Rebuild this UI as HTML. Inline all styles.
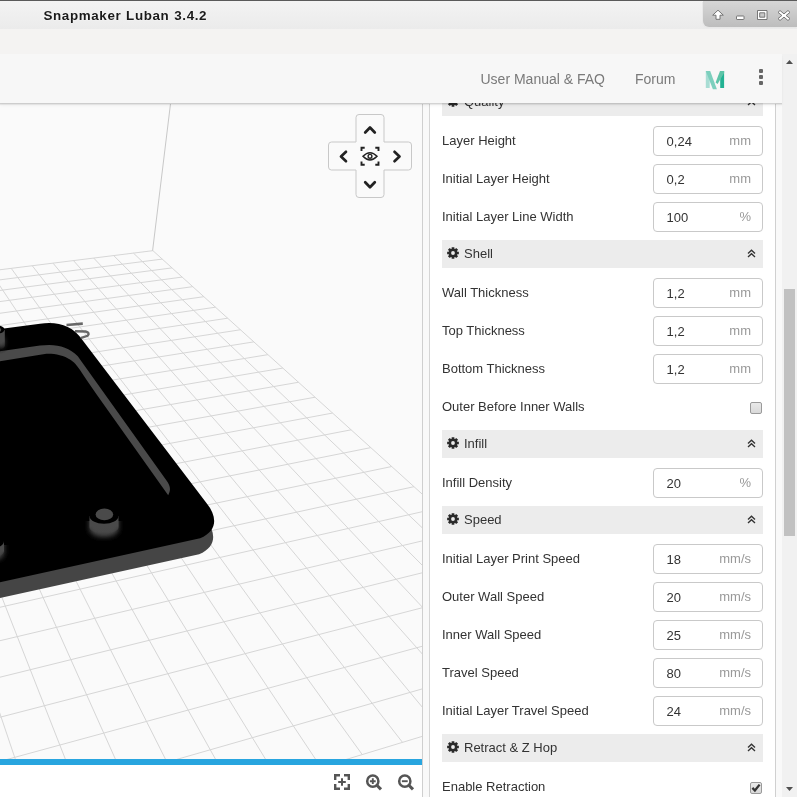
<!DOCTYPE html>
<html><head><meta charset="utf-8">
<style>
*{margin:0;padding:0;box-sizing:border-box}
html,body{width:797px;height:797px;overflow:hidden;background:#f8f8f8;font-family:"Liberation Sans",sans-serif}
body>*{will-change:transform}
.abs{position:absolute}
#title{position:absolute;left:0;top:0;width:797px;height:29px;background:linear-gradient(#f3f3f3,#ebebeb);border-top:1px solid #5a5a5a}
#title .t{position:absolute;left:43.5px;top:6.5px;font:bold 13.4px "Liberation Sans",sans-serif;color:#1a1a1a;text-shadow:0 0 2px #fff;letter-spacing:0.62px;word-spacing:0.5px}
#wbtn{position:absolute;left:703px;top:1px;width:94px;height:26px;background:linear-gradient(#d6d6d6,#bdbdbd);border-bottom-left-radius:6px;box-shadow:-1px 1px 0 #e8e8e8}
#band{position:absolute;left:0;top:29px;width:797px;height:25px;background:#f4f3f2}
#hdr{position:absolute;left:0;top:54px;width:782px;height:49px;background:#f7f7f7;box-shadow:0 1px 0 rgba(0,0,0,0.09),0 2px 1px rgba(0,0,0,0.07),0 3px 3px rgba(0,0,0,0.03);z-index:5}
#hdr .lnk{position:absolute;top:16px;font-size:14px;color:#7a7a7a;line-height:18px}
#sb{position:absolute;left:782px;top:54px;width:15px;height:743px;background:#f1f1f1}
#thumb{position:absolute;left:784px;top:289px;width:11px;height:247px;background:#c1c1c1}
#canvas{position:absolute;left:0;top:104px;width:422px;height:655px;background:#fafafa;overflow:hidden}
#blue{position:absolute;left:0;top:759px;width:422px;height:6px;background:#28a5df}
#tools{position:absolute;left:0;top:765px;width:422px;height:32px;background:#fff}
#vl1{position:absolute;left:422px;top:104px;width:1px;height:693px;background:#cfcfcf}
#strip1{position:absolute;left:423px;top:104px;width:6px;height:693px;background:#f9f9f9}
#vl2{position:absolute;left:429px;top:104px;width:1px;height:693px;background:#d5d5d5}
#card{position:absolute;left:430px;top:54px;width:345px;height:743px;background:#fff;overflow:hidden}
#vl3{position:absolute;left:775px;top:104px;width:1px;height:693px;background:#d0d0d0}
#strip2{position:absolute;left:776px;top:54px;width:6px;height:743px;background:#f9f9f9}
.hdr{position:absolute;left:12px;width:321px;height:28px;background:#ececec}
.hdr .gear{position:absolute;left:5px;top:7px}
.hdr .ht{position:absolute;left:22px;top:0;line-height:28px;font-size:13px;color:#333}
.hdr .chev{position:absolute;left:305.4px;top:9px}
.row{position:absolute;left:12px;width:321px;height:30px}
.lbl{position:absolute;left:0;top:0;line-height:30px;font-size:13px;color:#333}
.inp{position:absolute;left:211px;top:0;width:110px;height:30px;border:1px solid #c9c9c9;border-radius:4px;background:#fff}
.val{position:absolute;left:12.6px;top:1px;line-height:28px;font-size:13px;color:#333}
.unit{position:absolute;right:11px;top:0;line-height:28px;font-size:13px;color:#999}
.chk{position:absolute;left:308px;top:10px;width:12px;height:12px;border:1px solid #9a9a9a;border-radius:2px;background:linear-gradient(#e9e9e9,#d9d9d9)}
</style></head><body>
<div id="title"><span class="t">Snapmaker Luban 3.4.2</span></div>
<div id="wbtn">
<svg width="94" height="26" viewBox="0 0 94 26" style="position:absolute;left:0;top:0">
<g fill="#fff" stroke="#6a6a6a" stroke-width="0.9" stroke-linejoin="round">
<path d="M15 9.2 L20.3 14.2 L17 14.2 L17 18.3 L13 18.3 L13 14.2 L9.7 14.2 Z"/>
<rect x="33.5" y="15" width="7.5" height="3.5" rx="0.6"/>
<path fill-rule="evenodd" d="M54.5 9.5 H64 V18.5 H54.5 Z M56.7 11.8 V16.2 H61.8 V11.8 Z"/>
<path d="M77 9.5 L81 12.9 L85 9.5 L87 11.4 L83.1 14.5 L87 17.6 L85 19.5 L81 16.1 L77 19.5 L75 17.6 L78.9 14.5 L75 11.4 Z"/>
</g></svg>
</div>
<div id="band"></div>
<div id="canvas"><svg width="422" height="655" viewBox="0 104 422 655" style="position:absolute;left:0;top:0">
<path d="M152.93 250.66L622.82 675.47 M133.43 253.09L588.43 685.91 M113.69 255.56L553.16 696.62 M93.71 258.05L516.97 707.61 M73.48 260.58L479.82 718.88 M53.00 263.14L441.68 730.46 M32.25 265.73L402.50 742.36 M11.24 268.35L362.24 754.58 M-10.04 271.01L320.86 767.14 M-31.59 273.70L278.31 780.06 M-53.43 276.42L234.54 793.35 M-75.55 279.19L189.49 807.02 M-97.96 281.99L143.11 821.10 M-120.67 284.82L95.34 835.60 M-143.68 287.69L46.12 850.55 M-167.00 290.61L-4.63 865.95 M-190.64 293.56L-56.97 881.84 M-214.60 296.55L-110.98 898.24 M-238.88 299.58L-166.75 915.16 M-263.50 302.66L-224.35 932.65 M-288.47 305.77L-283.88 950.72 M-313.78 308.93L-345.44 969.41 M-339.45 312.14L-409.13 988.75 M-365.49 315.39L-475.07 1008.76 M152.93 250.66L-365.49 315.39 M162.26 259.09L-367.29 326.82 M171.99 267.89L-369.19 338.83 M182.14 277.07L-371.18 351.45 M192.75 286.67L-373.29 364.74 M203.85 296.70L-375.50 378.75 M215.47 307.20L-377.84 393.55 M227.64 318.21L-380.31 409.19 M240.42 329.76L-382.93 425.76 M253.84 341.89L-385.71 443.34 M267.95 354.65L-388.66 462.03 M282.81 368.08L-391.81 481.92 M298.49 382.25L-395.16 503.16 M315.04 397.22L-398.75 525.86 M332.55 413.05L-402.60 550.19 M351.09 429.82L-406.73 576.34 M370.78 447.61L-411.18 604.52 M391.71 466.53L-415.99 634.96 M414.00 486.68L-421.21 667.96 M437.79 508.20L-426.88 703.85 M463.25 531.21L-433.07 743.03 M490.55 555.89L-439.86 785.97 M519.90 582.42L-447.33 833.24 M551.53 611.02L-455.60 885.53 M585.73 641.94L-464.79 943.69 M622.82 675.47L-475.07 1008.76" stroke="#d6d6d6" stroke-width="1" fill="none"/>
<path d="M152.6 250.6 L170.6 103" stroke="#c8c8c8" stroke-width="1" fill="none"/>
</svg><svg width="422" height="655" viewBox="0 104 422 655" style="position:absolute;left:0;top:0">
<defs>
<clipPath id="cb2"><rect x="-30" y="545" width="60" height="40"/></clipPath>
<filter id="bl2" x="-20%" y="-50%" width="140%" height="200%"><feGaussianBlur stdDeviation="0.6"/></filter>
<clipPath id="cb"><rect x="70" y="521" width="70" height="40"/></clipPath>
<filter id="bl" x="-50%" y="-50%" width="200%" height="200%"><feGaussianBlur stdDeviation="2.6"/></filter>
<radialGradient id="glow" cx="0.5" cy="0.5" r="0.5"><stop offset="0" stop-color="#555" stop-opacity="0.9"/><stop offset="1" stop-color="#000" stop-opacity="0"/></radialGradient>
<linearGradient id="cyl" x1="0" y1="0" x2="0" y2="1"><stop offset="0" stop-color="#4a4a4a"/><stop offset="0.55" stop-color="#4a4a4a"/><stop offset="1" stop-color="#4a4a4a" stop-opacity="0"/></linearGradient>
</defs>
<path d="M -6.00 345.80 L 39.00 339.70 C 57.00 337.50 71.00 341.00 81.80 356.50 L 206.00 519.80 C 216.50 533.00 216.50 547.00 199.10 554.20 L -6.00 599.30 Z" fill="#454545"/>
<path d="M -5 329.8 L 40 323.7 C 58 321.5 72 325 82.8 340.5 L 207 503.8 C 217.5 517 217.5 531 200.1 538.2 L -5 583.3 Z" fill="#000"/>
<path d="M -5 352 L 40 345.6 C 55 343.5 68 346 77.8 356.3 L 166.5 480.5 C 170.5 486 171 490 168.2 495.3 L 97 395 C 85 378 78 366 74 362.5 C 66 355.5 56 353.5 46.4 353.8 L -5 362 Z" fill="#4a4a4a"/>
<g>
<path d="M89.5 516 L89.5 529 A14.5 8 0 0 0 118.5 529 L118.5 516 Z" fill="#4a4a4a" filter="url(#bl)" clip-path="url(#cb)"/>
<path d="M89.5 516 L89.5 527 A14.5 7 0 0 0 118.5 527 L118.5 516 Z" fill="url(#cyl)"/>
<ellipse cx="104" cy="516" rx="14.5" ry="7.8" fill="#000"/>
<ellipse cx="104.4" cy="514.4" rx="8.8" ry="5.8" fill="#4a4a4a"/>
</g>
<g>
<ellipse cx="1" cy="342" rx="9" ry="12" fill="url(#glow)"/>
<path d="M-10 330 L-10 346 A7.5 4.5 0 0 0 4.8 346 L4.8 330 Z" fill="url(#cyl)"/>
<ellipse cx="-2.5" cy="329.6" rx="7" ry="4" fill="#000"/>
<ellipse cx="-2" cy="329.8" rx="3.2" ry="2.2" fill="#4a4a4a"/>
</g>
<path d="M-25 541 L-25 553 A14.5 8 0 0 0 4 553 L4 541 Z" fill="#4a4a4a" filter="url(#bl)" clip-path="url(#cb2)"/>
<path d="M-25 541 L-25 551 A14.5 7 0 0 0 4 551 L4 541 Z" fill="url(#cyl)"/>
<ellipse cx="-10.5" cy="541" rx="14.5" ry="7.8" fill="#000"/>
<g filter="url(#bl2)" opacity="0.85"><path d="M66.5 325 L82.8 323.6" stroke="#505050" stroke-width="2.6" fill="none"/>
<path d="M75 331.2 L85.5 331.5 Q90.5 333 87.5 335.8 L80.5 338.2" stroke="#505050" stroke-width="2.4" fill="none"/></g>
</svg></div>
<svg width="86" height="86" viewBox="0 0 86 86" style="position:absolute;left:327px;top:113px">
<path d="M32 1.5 H54 A3 3 0 0 1 57 4.5 V29 H81.5 A3 3 0 0 1 84.5 32 V54 A3 3 0 0 1 81.5 57 H57 V81.5 A3 3 0 0 1 54 84.5 H32 A3 3 0 0 1 29 81.5 V57 H4.5 A3 3 0 0 1 1.5 54 V32 A3 3 0 0 1 4.5 29 H29 V4.5 A3 3 0 0 1 32 1.5 Z" fill="#fafafa" stroke="#c8c8c8" stroke-width="1"/>
<g fill="none" stroke="#222" stroke-width="2.7" stroke-linecap="round" stroke-linejoin="round">
<path d="M38.2 19.5 L43 14.5 L47.8 19.5"/>
<path d="M38.2 69.2 L43 74.2 L47.8 69.2"/>
<path d="M19 38.8 L14 43.5 L19 48.2"/>
<path d="M67.5 38.8 L72.5 43.5 L67.5 48.2"/>
</g>
<g fill="none" stroke="#222" stroke-width="1.9">
<path d="M34.5 38 V34.8 H37.7 M48.3 34.8 H51.5 V38 M51.5 48.5 V51.7 H48.3 M37.7 51.7 H34.5 V48.5"/>
<path d="M36 43.3 Q43 36 50 43.3 Q43 50.6 36 43.3 Z" stroke-width="1.5"/>
<circle cx="43" cy="43.3" r="1.9" stroke-width="1.4"/>
</g>
</svg>
<div id="blue"></div>
<div id="tools">
<svg width="422" height="32" viewBox="0 0 422 32" style="position:absolute;left:0;top:0">
<g fill="none" stroke="#555" stroke-width="2.4">
<path d="M335.2 15 V10.2 H340 M344 10.2 H348.8 V15 M348.8 19 V23.8 H344 M340 23.8 H335.2 V19"/>
<path d="M342 13.2 V20.8 M338.2 17 H345.8" stroke-width="2"/>
<circle cx="372.8" cy="16.2" r="5.6" stroke-width="2.5"/><path d="M376.6 20 L381 24.4" stroke-width="3"/>
<path d="M372.8 13.3 V19.1 M369.9 16.2 H375.7" stroke-width="1.9"/>
<circle cx="404.8" cy="16.2" r="5.6" stroke-width="2.5"/><path d="M408.6 20 L413 24.4" stroke-width="3"/>
<path d="M401.9 16.2 H407.7" stroke-width="1.9"/>
</g></svg>
</div>
<div id="vl1"></div><div id="strip1"></div><div id="vl2"></div>
<div id="card">
<div style="position:absolute;left:0;top:0;width:345px;height:743px;transform:translateY(-54px)">
<div class="hdr" style="top:88px"><svg class="gear" width="12" height="12" viewBox="0 0 12 12"><path d="M4.68 1.70 L4.65 0.15 L7.35 0.15 L7.32 1.70 L8.11 2.03 L9.18 0.91 L11.09 2.82 L9.97 3.89 L10.30 4.68 L11.85 4.65 L11.85 7.35 L10.30 7.32 L9.97 8.11 L11.09 9.18 L9.18 11.09 L8.11 9.97 L7.32 10.30 L7.35 11.85 L4.65 11.85 L4.68 10.30 L3.89 9.97 L2.82 11.09 L0.91 9.18 L2.03 8.11 L1.70 7.32 L0.15 7.35 L0.15 4.65 L1.70 4.68 L2.03 3.89 L0.91 2.82 L2.82 0.91 L3.89 2.03 Z M6 4.1 A1.9 1.9 0 1 0 6 7.9 A1.9 1.9 0 1 0 6 4.1 Z" fill="#2a2a2a" fill-rule="evenodd"/></svg><span class="ht">Quality</span><svg class="chev" width="9" height="9" viewBox="0 0 9 9"><path d="M1 4.5 L4.5 1.2 L8 4.5 M1 8 L4.5 4.7 L8 8" fill="none" stroke="#333" stroke-width="1.35"/></svg></div>
<div class="row" style="top:126px"><span class="lbl">Layer Height</span><div class="inp"><span class="val">0,24</span><span class="unit">mm</span></div></div>
<div class="row" style="top:164px"><span class="lbl">Initial Layer Height</span><div class="inp"><span class="val">0,2</span><span class="unit">mm</span></div></div>
<div class="row" style="top:202px"><span class="lbl">Initial Layer Line Width</span><div class="inp"><span class="val">100</span><span class="unit">%</span></div></div>
<div class="hdr" style="top:240px"><svg class="gear" width="12" height="12" viewBox="0 0 12 12"><path d="M4.68 1.70 L4.65 0.15 L7.35 0.15 L7.32 1.70 L8.11 2.03 L9.18 0.91 L11.09 2.82 L9.97 3.89 L10.30 4.68 L11.85 4.65 L11.85 7.35 L10.30 7.32 L9.97 8.11 L11.09 9.18 L9.18 11.09 L8.11 9.97 L7.32 10.30 L7.35 11.85 L4.65 11.85 L4.68 10.30 L3.89 9.97 L2.82 11.09 L0.91 9.18 L2.03 8.11 L1.70 7.32 L0.15 7.35 L0.15 4.65 L1.70 4.68 L2.03 3.89 L0.91 2.82 L2.82 0.91 L3.89 2.03 Z M6 4.1 A1.9 1.9 0 1 0 6 7.9 A1.9 1.9 0 1 0 6 4.1 Z" fill="#2a2a2a" fill-rule="evenodd"/></svg><span class="ht">Shell</span><svg class="chev" width="9" height="9" viewBox="0 0 9 9"><path d="M1 4.5 L4.5 1.2 L8 4.5 M1 8 L4.5 4.7 L8 8" fill="none" stroke="#333" stroke-width="1.35"/></svg></div>
<div class="row" style="top:278px"><span class="lbl">Wall Thickness</span><div class="inp"><span class="val">1,2</span><span class="unit">mm</span></div></div>
<div class="row" style="top:316px"><span class="lbl">Top Thickness</span><div class="inp"><span class="val">1,2</span><span class="unit">mm</span></div></div>
<div class="row" style="top:354px"><span class="lbl">Bottom Thickness</span><div class="inp"><span class="val">1,2</span><span class="unit">mm</span></div></div>
<div class="row" style="top:392px"><span class="lbl">Outer Before Inner Walls</span><div class="chk"></div></div>
<div class="hdr" style="top:430px"><svg class="gear" width="12" height="12" viewBox="0 0 12 12"><path d="M4.68 1.70 L4.65 0.15 L7.35 0.15 L7.32 1.70 L8.11 2.03 L9.18 0.91 L11.09 2.82 L9.97 3.89 L10.30 4.68 L11.85 4.65 L11.85 7.35 L10.30 7.32 L9.97 8.11 L11.09 9.18 L9.18 11.09 L8.11 9.97 L7.32 10.30 L7.35 11.85 L4.65 11.85 L4.68 10.30 L3.89 9.97 L2.82 11.09 L0.91 9.18 L2.03 8.11 L1.70 7.32 L0.15 7.35 L0.15 4.65 L1.70 4.68 L2.03 3.89 L0.91 2.82 L2.82 0.91 L3.89 2.03 Z M6 4.1 A1.9 1.9 0 1 0 6 7.9 A1.9 1.9 0 1 0 6 4.1 Z" fill="#2a2a2a" fill-rule="evenodd"/></svg><span class="ht">Infill</span><svg class="chev" width="9" height="9" viewBox="0 0 9 9"><path d="M1 4.5 L4.5 1.2 L8 4.5 M1 8 L4.5 4.7 L8 8" fill="none" stroke="#333" stroke-width="1.35"/></svg></div>
<div class="row" style="top:468px"><span class="lbl">Infill Density</span><div class="inp"><span class="val">20</span><span class="unit">%</span></div></div>
<div class="hdr" style="top:506px"><svg class="gear" width="12" height="12" viewBox="0 0 12 12"><path d="M4.68 1.70 L4.65 0.15 L7.35 0.15 L7.32 1.70 L8.11 2.03 L9.18 0.91 L11.09 2.82 L9.97 3.89 L10.30 4.68 L11.85 4.65 L11.85 7.35 L10.30 7.32 L9.97 8.11 L11.09 9.18 L9.18 11.09 L8.11 9.97 L7.32 10.30 L7.35 11.85 L4.65 11.85 L4.68 10.30 L3.89 9.97 L2.82 11.09 L0.91 9.18 L2.03 8.11 L1.70 7.32 L0.15 7.35 L0.15 4.65 L1.70 4.68 L2.03 3.89 L0.91 2.82 L2.82 0.91 L3.89 2.03 Z M6 4.1 A1.9 1.9 0 1 0 6 7.9 A1.9 1.9 0 1 0 6 4.1 Z" fill="#2a2a2a" fill-rule="evenodd"/></svg><span class="ht">Speed</span><svg class="chev" width="9" height="9" viewBox="0 0 9 9"><path d="M1 4.5 L4.5 1.2 L8 4.5 M1 8 L4.5 4.7 L8 8" fill="none" stroke="#333" stroke-width="1.35"/></svg></div>
<div class="row" style="top:544px"><span class="lbl">Initial Layer Print Speed</span><div class="inp"><span class="val">18</span><span class="unit">mm/s</span></div></div>
<div class="row" style="top:582px"><span class="lbl">Outer Wall Speed</span><div class="inp"><span class="val">20</span><span class="unit">mm/s</span></div></div>
<div class="row" style="top:620px"><span class="lbl">Inner Wall Speed</span><div class="inp"><span class="val">25</span><span class="unit">mm/s</span></div></div>
<div class="row" style="top:658px"><span class="lbl">Travel Speed</span><div class="inp"><span class="val">80</span><span class="unit">mm/s</span></div></div>
<div class="row" style="top:696px"><span class="lbl">Initial Layer Travel Speed</span><div class="inp"><span class="val">24</span><span class="unit">mm/s</span></div></div>
<div class="hdr" style="top:734px"><svg class="gear" width="12" height="12" viewBox="0 0 12 12"><path d="M4.68 1.70 L4.65 0.15 L7.35 0.15 L7.32 1.70 L8.11 2.03 L9.18 0.91 L11.09 2.82 L9.97 3.89 L10.30 4.68 L11.85 4.65 L11.85 7.35 L10.30 7.32 L9.97 8.11 L11.09 9.18 L9.18 11.09 L8.11 9.97 L7.32 10.30 L7.35 11.85 L4.65 11.85 L4.68 10.30 L3.89 9.97 L2.82 11.09 L0.91 9.18 L2.03 8.11 L1.70 7.32 L0.15 7.35 L0.15 4.65 L1.70 4.68 L2.03 3.89 L0.91 2.82 L2.82 0.91 L3.89 2.03 Z M6 4.1 A1.9 1.9 0 1 0 6 7.9 A1.9 1.9 0 1 0 6 4.1 Z" fill="#2a2a2a" fill-rule="evenodd"/></svg><span class="ht">Retract &amp; Z Hop</span><svg class="chev" width="9" height="9" viewBox="0 0 9 9"><path d="M1 4.5 L4.5 1.2 L8 4.5 M1 8 L4.5 4.7 L8 8" fill="none" stroke="#333" stroke-width="1.35"/></svg></div>
<div class="row" style="top:772px"><span class="lbl">Enable Retraction</span><div class="chk"><svg width="12" height="12" viewBox="0 0 12 12" style="position:absolute;left:-1px;top:-1px"><path d="M2.4 5.9 L4.9 8.5 L9.6 2.6" fill="none" stroke="#333" stroke-width="2.3"/></svg></div></div>
</div>
</div>
<div id="vl3"></div><div id="strip2"></div>
<div id="hdr">
<span class="lnk" style="left:480.5px">User Manual &amp; FAQ</span>
<span class="lnk" style="left:635px">Forum</span>
<svg width="20" height="19" viewBox="0 0 20 19" style="position:absolute;left:705px;top:17px">
<path d="M0.8 0 H4.7 V17 H0.8 Z" fill="#a8ddd4"/>
<path d="M0.8 0 H5.2 L11.9 18.2 H7.9 Z" fill="#7ccfbd"/>
<path d="M15.2 0 H19.1 V17 H15.2 Z" fill="#22b293"/>
<path d="M15 0 H19.1 V2 L12.6 13 L10.6 11.5 Z" fill="#5ec4a8"/>
</svg>
<div style="position:absolute;left:759px;top:15px;width:4px;height:4px;border-radius:1px;background:#666"></div>
<div style="position:absolute;left:759px;top:21px;width:4px;height:4px;border-radius:1px;background:#666"></div>
<div style="position:absolute;left:759px;top:27px;width:4px;height:4px;border-radius:1px;background:#666"></div>
</div>
<div id="sb"></div>
<div id="thumb"></div>
<svg width="15" height="743" style="position:absolute;left:782px;top:54px">
<path d="M4 10 L7.5 6 L11 10 Z" fill="#505050"/>
<path d="M4 733 L7.5 737 L11 733 Z" fill="#505050"/>
</svg>
</body></html>
